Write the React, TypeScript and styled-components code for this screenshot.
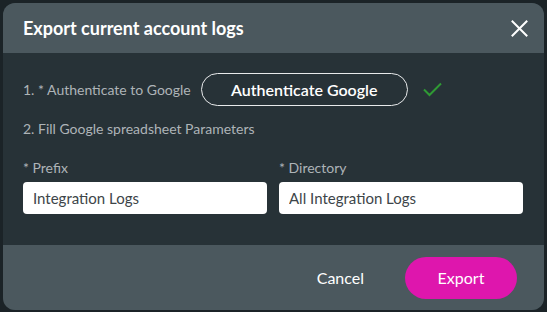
import styled, { createGlobalStyle } from "styled-components";

const GlobalStyle = createGlobalStyle`
  html, body {
    margin: 0;
    padding: 0;
    background: #1b2327;
    font-family: Lato, "Open Sans", sans-serif;
  }
`;

const App = () => {
  return (
    <>
      <GlobalStyle />
      <Page>
        <Modal>
          <Header>
            <Title>Export current account logs</Title>
            <CloseButton aria-label="close">
              <svg width="17" height="17" viewBox="0 0 17 17">
                <path
                  d="M1.5 1.5 L15.5 15.5 M15.5 1.5 L1.5 15.5"
                  stroke="#ffffff"
                  strokeWidth="2"
                  strokeLinecap="square"
                />
              </svg>
            </CloseButton>
          </Header>
          <Body>
            <StepRow>
              <StepText>1. * Authenticate to Google</StepText>
              <AuthButton>Authenticate Google</AuthButton>
              <svg width="19" height="15" viewBox="0 0 19 15">
                <path
                  d="M1 7.5 L6.5 13 L18 1.5"
                  fill="none"
                  stroke="#2f9a34"
                  strokeWidth="2"
                />
              </svg>
            </StepRow>
            <StepLine>2. Fill Google spreadsheet Parameters</StepLine>
            <Fields>
              <Field>
                <Label>* Prefix</Label>
                <Input defaultValue="Integration Logs" />
              </Field>
              <Field>
                <Label>* Directory</Label>
                <Input defaultValue="All Integration Logs" />
              </Field>
            </Fields>
          </Body>
          <Footer>
            <CancelButton>Cancel</CancelButton>
            <ExportButton>Export</ExportButton>
          </Footer>
        </Modal>
      </Page>
    </>
  );
};

const Page = styled.div`
  width: 547px;
  height: 312px;
  padding: 3px;
  box-sizing: border-box;
`;

const Modal = styled.div`
  width: 541px;
  height: 307px;
  border-radius: 12px;
  overflow: hidden;
  display: flex;
  flex-direction: column;
  background: #273237;
`;

const Header = styled.div`
  height: 50px;
  flex-shrink: 0;
  background: #4b585e;
  display: flex;
  align-items: center;
  justify-content: space-between;
  padding: 0 16px 0 20px;
`;

const Title = styled.h2`
  margin: 0;
  font-size: 18px;
  font-weight: 700;
  color: #ffffff;
`;

const CloseButton = styled.button`
  border: none;
  background: none;
  padding: 0;
  display: flex;
  cursor: pointer;
`;

const Body = styled.div`
  flex: 1;
  padding: 20px 21px 0 20px;
  display: flex;
  flex-direction: column;
`;

const StepRow = styled.div`
  display: flex;
  align-items: center;
  height: 33px;
`;

const StepText = styled.span`
  font-size: 14px;
  color: #aeb4b7;
  margin-right: 10px;
`;

const AuthButton = styled.button`
  height: 33px;
  width: 207px;
  border: 1px solid #e8eaeb;
  border-radius: 17px;
  background: transparent;
  color: #ffffff;
  font-family: Lato, sans-serif;
  font-size: 16px;
  font-weight: 600;
  margin-right: 15px;
  cursor: pointer;
`;

const StepLine = styled.div`
  margin-top: 14px;
  font-size: 14px;
  line-height: 17px;
  color: #aeb4b7;
`;

const Fields = styled.div`
  margin-top: 22px;
  display: grid;
  grid-template-columns: 1fr 1fr;
  gap: 12px;
`;

const Field = styled.div`
  display: flex;
  flex-direction: column;
  gap: 6px;
`;

const Label = styled.label`
  font-size: 14px;
  line-height: 17px;
  color: #aeb4b7;
`;

const Input = styled.input`
  height: 32px;
  box-sizing: border-box;
  border: none;
  border-radius: 4px;
  background: #ffffff;
  padding: 0 10px;
  font-family: Lato, sans-serif;
  font-size: 15px;
  color: #3d4549;
  outline: none;
`;

const Footer = styled.div`
  height: 65px;
  flex-shrink: 0;
  background: #4b585e;
  display: flex;
  align-items: center;
  justify-content: flex-end;
  padding: 0 27px 0 0;
  gap: 33px;
`;

const CancelButton = styled.button`
  border: none;
  background: none;
  color: #ffffff;
  font-family: Lato, sans-serif;
  font-size: 16px;
  padding: 0 8px;
  cursor: pointer;
`;

const ExportButton = styled.button`
  width: 112px;
  height: 42px;
  border: none;
  border-radius: 21px;
  background: #de16ad;
  color: #ffffff;
  font-family: Lato, sans-serif;
  font-size: 16px;
  cursor: pointer;
`;

export default App;
